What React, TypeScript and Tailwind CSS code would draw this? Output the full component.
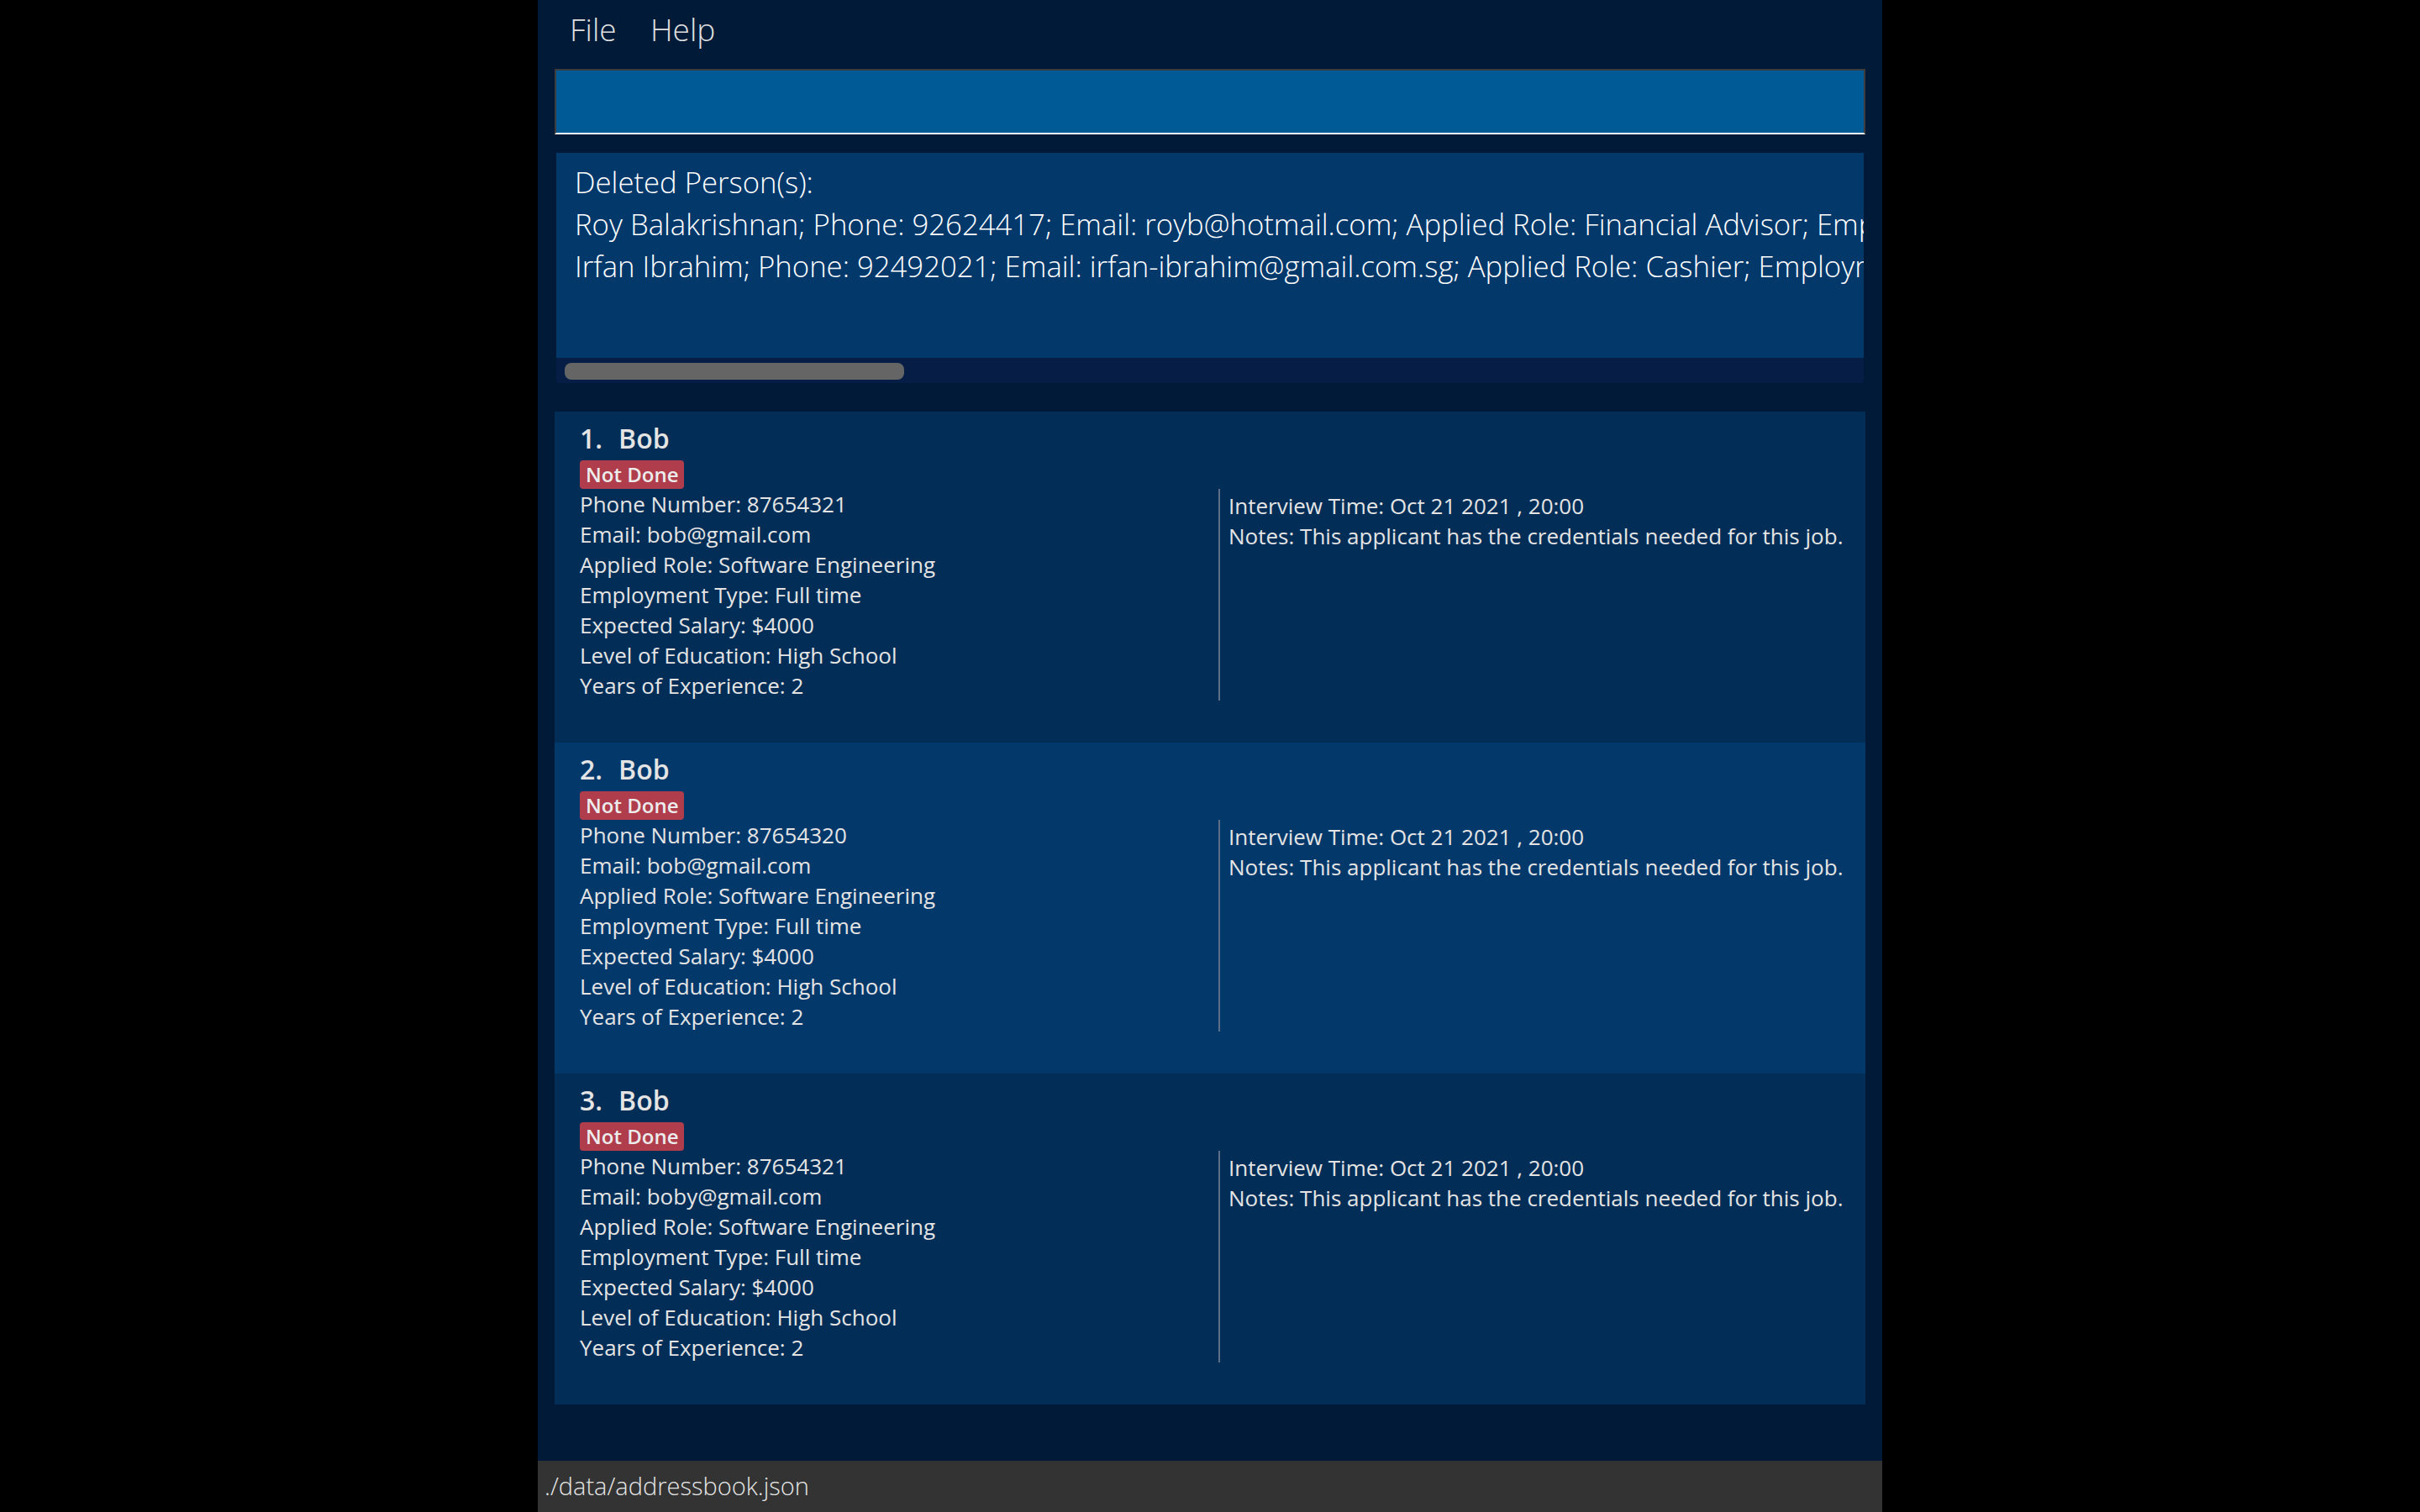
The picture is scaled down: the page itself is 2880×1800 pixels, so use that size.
import React from "react";

interface Applicant {
  name: string;
  phone: string;
  email: string;
  role: string;
  employment: string;
  salary: string;
  education: string;
  experience: string;
  interview: string;
  notes: string;
}

const applicants: Applicant[] = [
  { name: "Bob", phone: "87654321", email: "bob@gmail.com", role: "Software Engineering", employment: "Full time", salary: "$4000", education: "High School", experience: "2", interview: "Oct 21 2021 , 20:00", notes: "This applicant has the credentials needed for this job." },
  { name: "Bob", phone: "87654320", email: "bob@gmail.com", role: "Software Engineering", employment: "Full time", salary: "$4000", education: "High School", experience: "2", interview: "Oct 21 2021 , 20:00", notes: "This applicant has the credentials needed for this job." },
  { name: "Bob", phone: "87654321", email: "boby@gmail.com", role: "Software Engineering", employment: "Full time", salary: "$4000", education: "High School", experience: "2", interview: "Oct 21 2021 , 20:00", notes: "This applicant has the credentials needed for this job." },
];

// horizontally scrolled log, clipped at the box edge like the original
const deleted = [
  "Roy Balakrishnan; Phone: 92624417; Email: royb@hotmail.com; Applied Role: Financial Advisor; Employment Type: Full time; Expected Salary: $3000; Level of Education: Bachelors",
  "Irfan Ibrahim; Phone: 92492021; Email: irfan-ibrahim@gmail.com.sg; Applied Role: Cashier; Employment Type: Part time; Expected Salary: $1500; Level of Education: High School",
];

function ApplicantCard({ a, index }: { a: Applicant; index: number }) {
  const bg = index % 2 === 0 ? "bg-[#012d57]" : "bg-[#03386b]";
  const fields = [
    `Phone Number: ${a.phone}`,
    `Email: ${a.email}`,
    `Applied Role: ${a.role}`,
    `Employment Type: ${a.employment}`,
    `Expected Salary: ${a.salary}`,
    `Level of Education: ${a.education}`,
    `Years of Experience: ${a.experience}`,
  ];
  return (
    <div className={`${bg} h-[394px] pl-[30px] pt-[10px] text-[#e4e4e4]`}>
      <div className="flex text-[32px] leading-[44px] font-semibold">
        <span>{index + 1}.</span>
        <span className="ml-[19px]">{a.name}</span>
      </div>
      <div className="mt-[4px] flex">
        <span className="h-[34px] px-[7px] rounded-[4px] bg-[#b03d4c] text-[24px] leading-[34px] font-semibold text-[#ececec]">
          Not Done
        </span>
      </div>
      <div className="flex text-[26px] leading-[36px]">
        <div className="w-[760px]">
          {fields.map((f) => (
            <div key={f}>{f}</div>
          ))}
        </div>
        <div className="border-l-2 border-[#5d6f88] pl-[10px] pt-[2px]">
          <div>Interview Time: {a.interview}</div>
          <div>Notes: {a.notes}</div>
        </div>
      </div>
    </div>
  );
}

export default function App() {
  return (
    <div className="flex justify-center h-[1800px] bg-black" style={{ fontFamily: '"Open Sans", sans-serif' }}>
      <div className="w-[1600px] h-[1800px] bg-[#011a38] flex flex-col">
        {/* Menu bar */}
        <div className="h-[82px] pl-[38px] pt-[10px] flex text-[37px] leading-[50px] font-light text-[#e0e0e0]">
          <span className="w-[96px]">File</span>
          <span>Help</span>
        </div>

        {/* Command box */}
        <div className="mx-[20px] h-[78px] bg-[#005a96] border-2 border-[#3c3c3c] border-b-white" />

        {/* Result display */}
        <div className="mx-[22px] mt-[22px] h-[274px] flex flex-col rounded-b-[4px] overflow-hidden">
          <div className="h-[244px] bg-[#03386b] pl-[22px] pt-[10px] overflow-hidden whitespace-nowrap text-[34.7px] leading-[50px] font-light text-white">
            <div>Deleted Person(s):</div>
            {deleted.map((d) => (
              <div key={d}>{d}</div>
            ))}
          </div>
          <div className="h-[30px] bg-[#061e45] pl-[10px] pt-[6px]">
            <div className="w-[404px] h-[20px] rounded-[8px] bg-[#656565]" />
          </div>
        </div>

        {/* Applicant list */}
        <div className="mx-[20px] mt-[34px] flex flex-col">
          {applicants.map((a, i) => (
            <ApplicantCard key={i} a={a} index={i} />
          ))}
        </div>

        <div className="flex-1" />

        {/* Status bar */}
        <div className="h-[61px] bg-[#333333] pl-[8px] pt-[11px] text-[29px] leading-[38px] font-light text-[#e6e6e6]">
          ./data/addressbook.json
        </div>
      </div>
    </div>
  );
}
